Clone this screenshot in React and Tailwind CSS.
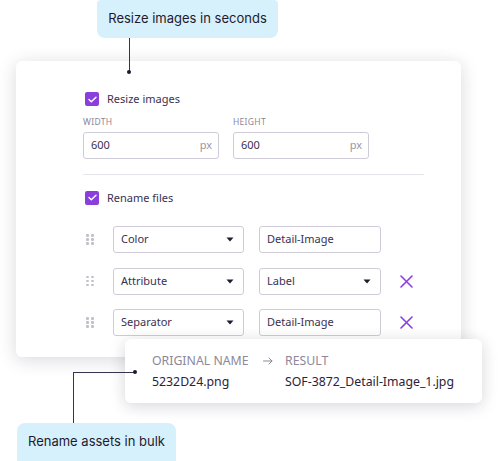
import React from "react";

const purple = "#8a3fdc";

function Checkbox() {
  return (
    <span className="flex h-[14px] w-[14px] items-center justify-center rounded-[2px] bg-[#8a3fdc]">
      <svg width="9" height="7" viewBox="0 0 9 7" fill="none">
        <path d="M1 3.6L3.3 5.8L8 1.2" stroke="white" strokeWidth="1.4" strokeLinecap="round" strokeLinejoin="round" />
      </svg>
    </span>
  );
}

function Handle() {
  return (
    <div className="grid w-[8px] grid-cols-2 gap-x-[2px] gap-y-[1.5px]">
      {[0, 1, 2, 3, 4, 5].map((i) => (
        <span key={i} className="h-[2.5px] w-[2.5px] rounded-[1px] bg-[#c4c0cb]" />
      ))}
    </div>
  );
}

function Caret() {
  return (
    <svg width="8" height="5" viewBox="0 0 8 5">
      <path d="M0.5 0.5H7.5L4 4.5Z" fill="#1f1a2e" />
    </svg>
  );
}

function Close() {
  return (
    <svg width="13" height="13" viewBox="0 0 13 13" className="ml-[19px]">
      <path d="M1 1L12 12M12 1L1 12" stroke={purple} strokeWidth="1.6" strokeLinecap="round" />
    </svg>
  );
}

function Field({ children, select, w }) {
  return (
    <div
      className={`flex h-[27px] items-center justify-between rounded-[3px] border border-[#cfcbd8] bg-white pl-[7px] pr-[9px] text-[11px] text-[#3a3150] ${w}`}
    >
      <span>{children}</span>
      {select && <Caret />}
    </div>
  );
}

function Row({ left, right, rightSelect, close }) {
  return (
    <div className="flex items-center">
      <div className="ml-[3px] mr-[19px]">
        <Handle />
      </div>
      <Field select w="w-[131px]">{left}</Field>
      <div className="ml-[15px]">
        <Field select={rightSelect} w="w-[122px]">{right}</Field>
      </div>
      {close && <Close />}
    </div>
  );
}

export default function App() {
  return (
    <div
      className="relative h-[461px] w-[500px] overflow-hidden bg-white"
      style={{ fontFamily: '"Noto Sans", "Open Sans", sans-serif' }}
    >
      {/* top callout */}
      <div className="ml-[97px] flex h-[38px] w-[181px] items-center justify-center rounded-b-[8px] rounded-t-[4px] bg-[#d7f1fc] font-['Inter',sans-serif] text-[13px] text-[#1f1a2e]">
        Resize images in seconds
      </div>

      {/* main card */}
      <div className="ml-[16px] mt-[23px] h-[296px] w-[445px] rounded-[6px] bg-white pl-[67px] pt-[30px] shadow-[0_3px_18px_rgba(30,20,50,0.17)]">
        <label className="flex items-center gap-[8px] pl-[2px] text-[11px] text-[#3a3150]">
          <Checkbox />
          Resize images
        </label>
        <div className="mt-[8px] flex gap-[14px]">
          {["WIDTH", "HEIGHT"].map((l) => (
            <div key={l}>
              <div className="text-[8.5px] leading-[12px] tracking-[0.3px] text-[#8d8799]">{l}</div>
              <div className="mt-[4px] flex h-[27px] w-[136px] items-center justify-between rounded-[3px] border border-[#cfcbd8] pl-[7px] pr-[6px] text-[11px] text-[#3a3150]">
                <span>600</span>
                <span className="text-[#9a95a4]">px</span>
              </div>
            </div>
          ))}
        </div>
        <div className="mt-[15px] h-px w-[341px] bg-[#e6e3ea]" />
        <label className="mt-[15px] flex items-center gap-[8px] pl-[2px] text-[11px] text-[#3a3150]">
          <Checkbox />
          Rename files
        </label>
        <div className="mt-[20px] flex flex-col gap-[14.5px]">
          <Row left="Color" right="Detail-Image" />
          <Row left="Attribute" right="Label" rightSelect close />
          <Row left="Separator" right="Detail-Image" close />
        </div>
      </div>

      {/* connector top */}
      <div className="absolute left-[129px] top-[38px] h-[34px] w-px bg-[#3a3150]" />
      <div className="absolute left-[127px] top-[70px] h-[4px] w-[4px] rounded-full bg-[#1f1a2e]" />

      {/* result card */}
      <div className="absolute left-[125px] top-[339px] flex h-[64px] w-[357px] flex-col justify-center rounded-[6px] bg-white pl-[27px] shadow-[0_3px_16px_rgba(30,20,50,0.18)]">
        <div className="flex items-center text-[12.3px] leading-[16px] text-[#8d8799]">
          <span className="w-[111px]">ORIGINAL NAME</span>
          <span className="w-[22px]">
            <svg width="10" height="8" viewBox="0 0 10 8" fill="none">
              <path d="M0.5 4H9M6 1L9 4L6 7" stroke="#8d8799" strokeWidth="1" strokeLinecap="round" strokeLinejoin="round" />
            </svg>
          </span>
          <span>RESULT</span>
        </div>
        <div className="mt-[5px] flex text-[12.3px] leading-[16px] text-[#2a2238]">
          <span className="w-[133px]">5232D24.png</span>
          <span>SOF-3872_Detail-Image_1.jpg</span>
        </div>
      </div>

      {/* connector bottom */}
      <div className="absolute left-[73px] top-[372px] h-px w-[62px] bg-[#3a3150]" />
      <div className="absolute left-[73px] top-[372px] h-[51px] w-px bg-[#3a3150]" />
      <div className="absolute left-[133px] top-[370px] h-[4px] w-[4px] rounded-full bg-[#1f1a2e]" />

      {/* bottom callout */}
      <div className="absolute left-[17px] top-[423px] flex h-[38px] w-[159px] items-center justify-center rounded-t-[8px] bg-[#d7f1fc] font-['Inter',sans-serif] text-[13px] text-[#1f1a2e]">
        Rename assets in bulk
      </div>
    </div>
  );
}
